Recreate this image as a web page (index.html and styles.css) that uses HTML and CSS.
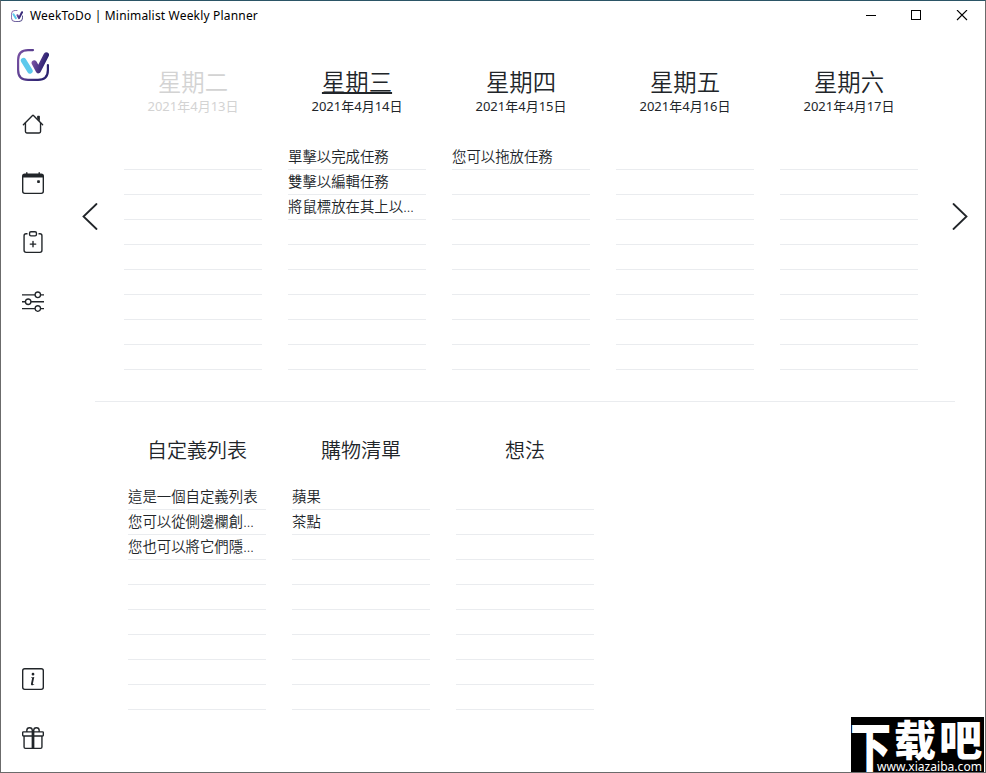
FILE: index.html
```
<!DOCTYPE html>
<html lang="zh-Hant">
<head>
<meta charset="utf-8">
<title>WeekToDo | Minimalist Weekly Planner</title>
<link rel="stylesheet" href="styles.css">
</head>
<body>
<svg width="0" height="0" class="defs">
  <defs>
    <linearGradient id="purple" x1="0" y1="0" x2="1" y2="0.4">
      <stop offset="0" stop-color="#7a52a4"/>
      <stop offset="1" stop-color="#2b2270"/>
    </linearGradient>
    <symbol id="logo" viewBox="0 0 32 32">
      <path d="M16 1.1H11Q1.1 1.1 1.1 11V21Q1.1 30.9 11 30.9H21Q30.9 30.9 30.9 21V16" fill="none" stroke="url(#purple)" stroke-width="2.2" stroke-linecap="round"/>
      <path d="M6.5 11.5L13 22" stroke="#5cc9ec" stroke-width="5.4" stroke-linecap="round"/>
      <path d="M17.3 14L21.3 21.6L29.3 6" fill="none" stroke="url(#purple)" stroke-width="5.4" stroke-linecap="round" stroke-linejoin="round"/>
    </symbol>
  </defs>
</svg>

<div class="window">
  <header class="titlebar">
    <svg class="app-icon"><use href="#logo"/></svg>
    <span class="app-title">WeekToDo | Minimalist Weekly Planner</span>
    <svg class="win-buttons" width="104" height="12" viewBox="0 0 104 12" fill="none" stroke="#000" shape-rendering="crispEdges">
      <path d="M0 5.5H10"/>
      <rect x="45.5" y=".5" width="9" height="9"/>
      <path d="M91 0L101 10M101 0L91 10" shape-rendering="auto" stroke-width="1.1"/>
    </svg>
  </header>

  <div class="content">
    <nav class="sidebar">
      <svg class="logo"><use href="#logo"/></svg>
      <svg class="icon" viewBox="0 0 16 16">
        <path fill-rule="evenodd" d="M2 13.5V7h1v6.5a.5.5 0 0 0 .5.5h9a.5.5 0 0 0 .5-.5V7h1v6.5a1.5 1.5 0 0 1-1.5 1.5h-9A1.5 1.5 0 0 1 2 13.5zm11-11V6l-2-2V2.500a.5.5 0 0 1 .5-.5h1a.5.5 0 0 1 .5.5z"/>
        <path fill-rule="evenodd" d="M7.293 1.500a1 1 0 0 1 1.414 0l6.647 6.646a.5.5 0 0 1-.708.708L8 2.207 1.354 8.854a.5.5 0 1 1-.708-.708L7.293 1.500z"/>
      </svg>
      <svg class="icon" viewBox="0 0 16 16">
        <path d="M11 6.500a.5.5 0 0 1 .5-.5h1a.5.5 0 0 1 .5.5v1a.5.5 0 0 1-.5.5h-1a.5.5 0 0 1-.5-.5v-1z"/>
        <path d="M3.500 0a.5.5 0 0 1 .5.5V1h8V.5a.5.5 0 0 1 1 0V1h1a2 2 0 0 1 2 2v11a2 2 0 0 1-2 2H2a2 2 0 0 1-2-2V3a2 2 0 0 1 2-2h1V.5a.5.5 0 0 1 .5-.5zM1 4v10a1 1 0 0 0 1 1h12a1 1 0 0 0 1-1V4H1z"/>
      </svg>
      <svg class="icon" viewBox="0 0 16 16">
        <path fill-rule="evenodd" d="M8 7a.5.5 0 0 1 .5.5V9H10a.5.5 0 0 1 0 1H8.500v1.500a.5.5 0 0 1-1 0V10H6a.5.5 0 0 1 0-1h1.500V7.500A.5.5 0 0 1 8 7z"/>
        <path d="M4 1.500H3a2 2 0 0 0-2 2V14a2 2 0 0 0 2 2h10a2 2 0 0 0 2-2V3.500a2 2 0 0 0-2-2h-1v1h1a1 1 0 0 1 1 1V14a1 1 0 0 1-1 1H3a1 1 0 0 1-1-1V3.500a1 1 0 0 1 1-1h1v-1z"/>
        <path d="M9.500 1a.5.5 0 0 1 .5.5v1a.5.5 0 0 1-.5.5h-3a.5.5 0 0 1-.5-.5v-1a.5.5 0 0 1 .5-.5h3zm-3-1A1.500 1.500 0 0 0 5 1.500v1A1.500 1.500 0 0 0 6.500 4h3A1.500 1.500 0 0 0 11 2.500v-1A1.500 1.500 0 0 0 9.500 0h-3z"/>
      </svg>
      <svg class="icon" viewBox="0 0 16 16">
        <path fill-rule="evenodd" d="M11.500 2a1.500 1.500 0 1 0 0 3 1.500 1.500 0 0 0 0-3zM9.050 3a2.500 2.500 0 0 1 4.900 0H16v1h-2.050a2.500 2.500 0 0 1-4.900 0H0V3h9.050zM4.500 7a1.500 1.500 0 1 0 0 3 1.500 1.500 0 0 0 0-3zM2.050 8a2.500 2.500 0 0 1 4.900 0H16v1H6.950a2.500 2.500 0 0 1-4.900 0H0V8h2.050zm9.450 4a1.500 1.500 0 1 0 0 3 1.500 1.500 0 0 0 0-3zm-2.450 1a2.500 2.500 0 0 1 4.900 0H16v1h-2.050a2.500 2.500 0 0 1-4.900 0H0v-1h9.050z"/>
      </svg>
      <svg class="icon bottom" viewBox="0 0 16 16">
        <path d="M14 1a1 1 0 0 1 1 1v12a1 1 0 0 1-1 1H2a1 1 0 0 1-1-1V2a1 1 0 0 1 1-1h12zM2 0a2 2 0 0 0-2 2v12a2 2 0 0 0 2 2h12a2 2 0 0 0 2-2V2a2 2 0 0 0-2-2H2z"/>
        <path d="M8.930 6.588l-2.290.287-.082.380.450.083c.294.070.352.176.288.469l-.738 3.468c-.194.897.105 1.319.808 1.319.545 0 1.178-.252 1.465-.598l.088-.416c-.2.176-.492.246-.686.246-.275 0-.375-.193-.304-.533L8.930 6.588zM9 4.500a1 1 0 1 1-2 0 1 1 0 0 1 2 0z"/>
      </svg>
      <svg class="icon" viewBox="0 0 16 16">
        <path d="M3 2.500a2.500 2.500 0 0 1 5 0 2.500 2.500 0 0 1 5 0v.006c0 .070 0 .270-.038.494H15a1 1 0 0 1 1 1v2a1 1 0 0 1-1 1v7.500a1.500 1.500 0 0 1-1.500 1.500h-11A1.500 1.500 0 0 1 1 14.500V7a1 1 0 0 1-1-1V4a1 1 0 0 1 1-1h2.038A2.968 2.968 0 0 1 3 2.506V2.500zm1.068.5H7v-.5a1.500 1.500 0 1 0-3 0c0 .085.002.274.045.430a.522.522 0 0 0 .023.070zM9 3h2.932a.560.560 0 0 0 .023-.070c.043-.156.045-.345.045-.430a1.500 1.500 0 0 0-3 0V3zM1 4v2h6V4H1zm8 0v2h6V4H9zm5 3H9v8h4.500a.5.5 0 0 0 .5-.5V7zm-7 8V7H2v7.500a.5.5 0 0 0 .5.5H7z"/>
      </svg>
    </nav>

    <main>
      <section class="week">
        <svg class="arrow" viewBox="0 0 16 28"><path d="M14.500 2L1.500 14.500L14.500 27"/></svg>
        <div class="columns">
          <div class="day past">
            <h2>星期二</h2>
            <p class="date">2021年4月13日</p>
            <ul><li></li><li></li><li></li><li></li><li></li><li></li><li></li><li></li><li></li></ul>
          </div>
          <div class="day today">
            <h2>星期三</h2>
            <p class="date">2021年4月14日</p>
            <ul>
              <li>單擊以完成任務</li>
              <li>雙擊以編輯任務</li>
              <li>將鼠標放在其上以...</li>
              <li></li><li></li><li></li><li></li><li></li><li></li>
            </ul>
          </div>
          <div class="day">
            <h2>星期四</h2>
            <p class="date">2021年4月15日</p>
            <ul>
              <li>您可以拖放任務</li>
              <li></li><li></li><li></li><li></li><li></li><li></li><li></li><li></li>
            </ul>
          </div>
          <div class="day">
            <h2>星期五</h2>
            <p class="date">2021年4月16日</p>
            <ul><li></li><li></li><li></li><li></li><li></li><li></li><li></li><li></li><li></li></ul>
          </div>
          <div class="day">
            <h2>星期六</h2>
            <p class="date">2021年4月17日</p>
            <ul><li></li><li></li><li></li><li></li><li></li><li></li><li></li><li></li><li></li></ul>
          </div>
        </div>
        <svg class="arrow" viewBox="0 0 16 28"><path d="M1.500 2L14.500 14.500L1.500 27"/></svg>
      </section>

      <hr>

      <section class="columns lists">
        <div class="list">
          <h3>自定義列表</h3>
          <ul>
            <li>這是一個自定義列表</li>
            <li>您可以從側邊欄創...</li>
            <li>您也可以將它們隱...</li>
            <li></li><li></li><li></li><li></li><li></li><li></li>
          </ul>
        </div>
        <div class="list">
          <h3>購物清單</h3>
          <ul>
            <li>蘋果</li>
            <li>茶點</li>
            <li></li><li></li><li></li><li></li><li></li><li></li><li></li>
          </ul>
        </div>
        <div class="list">
          <h3>想法</h3>
          <ul><li></li><li></li><li></li><li></li><li></li><li></li><li></li><li></li><li></li></ul>
        </div>
      </section>
    </main>
  </div>

  <svg class="watermark" viewBox="0 0 133 56">
    <rect width="133" height="56" fill="#000"/>
    <g class="mark">
      <text transform="translate(-1 50) scale(.98 1.28)">下</text>
      <text transform="translate(43 39)">载</text>
      <text transform="translate(88 39) scale(1.03 1)">吧</text>
    </g>
    <text class="url" x="26" y="54" textLength="105" lengthAdjust="spacingAndGlyphs">www.xiazaiba.com</text>
  </svg>
</div>
</body>
</html>
```
FILE: styles.css
```
* {
  box-sizing: border-box;
}

body {
  margin: 0;
  font-family: "Noto Sans", "Noto Sans CJK TC", sans-serif;
  font-size: 14.4px;
  color: #212529;
  background: #fff;
}

.defs {
  position: absolute;
}

.window {
  display: flex;
  flex-direction: column;
  position: relative;
  width: 986px;
  height: 773px;
  overflow: hidden;
  border: 1px solid #6b6b6b;
  border-top-color: #2b5566;
}

/* title bar */
.titlebar {
  display: flex;
  align-items: center;
  height: 29px;
  padding: 0 15px 0 10px;
}
.app-icon {
  width: 12px;
  height: 12px;
}
.app-title {
  flex: 1;
  margin-left: 7px;
  font-family: "Noto Sans", sans-serif;
  font-size: 12px;
  letter-spacing: 0.18px;
  color: #000;
}
.win-buttons {
  width: 104px;
}

.content {
  display: flex;
  flex: 1;
}

/* sidebar */
.sidebar {
  display: flex;
  flex-direction: column;
  align-items: center;
  gap: 37px;
  width: 64px;
  padding: 19px 0 23px;
}
.logo {
  width: 32px;
  height: 32px;
  margin-bottom: -5px;
}
.icon {
  width: 22px;
  height: 22px;
  fill: #212529;
}
.icon.bottom {
  margin-top: auto;
}

main {
  flex: 1;
  min-width: 0;
}

ul {
  list-style: none;
  margin: 0;
  padding: 0;
}
li {
  height: 25px;
  line-height: 23px;
  border-bottom: 1px solid #eaecef;
  font-weight: 350;
  white-space: nowrap;
  overflow: hidden;
}

/* week */
.week {
  display: flex;
  padding: 36px 17px 0;
}
.arrow {
  width: 16px;
  height: 28px;
  margin-top: 136px;
  fill: none;
  stroke: #212529;
  stroke-width: 1.8;
  stroke-linecap: round;
}
.columns {
  display: flex;
  gap: 26px;
}
.week .columns {
  flex: 1;
  padding-left: 26px;
}
.day, .list {
  width: 138px;
}
h2, h3, .date {
  margin: 0;
  text-align: center;
}
h2 {
  height: 32px;
  line-height: 33px;
  font-size: 23.4px;
  font-weight: 350;
}
.date {
  height: 47px;
  line-height: 17px;
  font-size: 13px;
}
.past h2, .past .date {
  color: #d3d3d3;
}
.today h2 {
  text-decoration: underline;
  text-decoration-thickness: 2px;
  text-underline-offset: 1px;
}

hr {
  height: 1px;
  margin: 31px 30px 0;
  border: 0;
  background: #eaecef;
}

/* custom lists */
.lists {
  padding: 34px 0 0 63px;
}
h3 {
  height: 49px;
  line-height: 30px;
  font-size: 20px;
  font-weight: 350;
}

.watermark {
  position: absolute;
  right: 1px;
  bottom: -1px;
  width: 133px;
  height: 56px;
  fill: #fff;
}
.mark {
  font: 900 42px "Noto Sans CJK SC", sans-serif;
}
.url {
  font: 12px "Noto Sans", sans-serif;
}
```
